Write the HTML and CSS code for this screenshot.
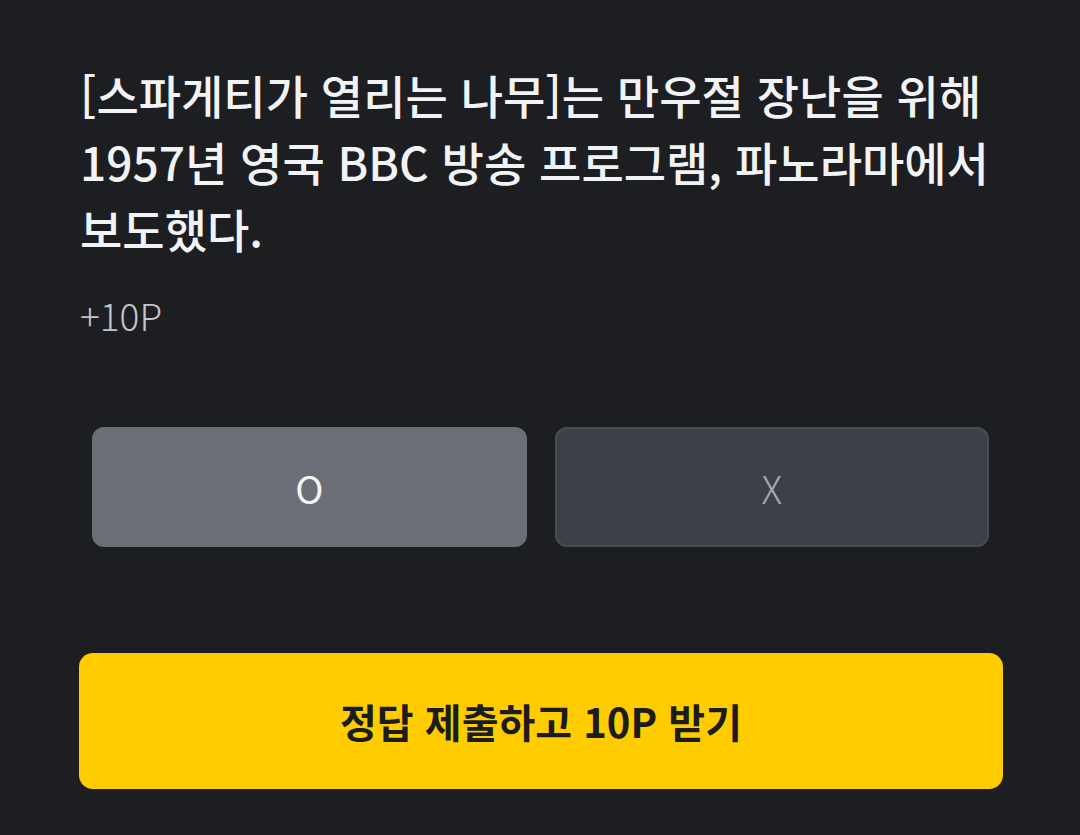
FILE: index.html
```html
<!DOCTYPE html>
<html lang="ko">
<head>
  <meta charset="UTF-8" />
  <meta name="viewport" content="width=device-width, initial-scale=1.0"/>
  <title>OX 퀴즈</title>
  <link rel="stylesheet" href="styles.css">
</head>
<body>

  <div class="quiz">
    <h1 class="question">[스파게티가 열리는 나무]는 만우절 장난을 위해<br>1957년 영국 BBC 방송 프로그램, 파노라마에서<br>보도했다.</h1>
    <div class="reward">+10P</div>

    <div class="choices">
      <button class="choice selected">O</button>
      <button class="choice">X</button>
    </div>

    <button class="submit">정답 제출하고 10P 받기</button>
  </div>

</body>
</html>
```

FILE: styles.css
```css
body {
  font-family: 'Noto Sans CJK KR', 'Noto Sans', sans-serif;
  background: #1d1e22;
  margin: 0;
  padding: 0;
}

.quiz {
  padding: 61px 77px 0 80px;
}

.question {
  color: #f2f3f5;
  font-size: 46px;
  font-weight: 500;
  line-height: 67px;
  margin: 0;
  white-space: nowrap;
}

.reward {
  color: #c2c5ca;
  font-size: 37px;
  font-weight: 300;
  margin-top: 29px;
  line-height: 48px;
}

.choices {
  display: flex;
  gap: 28px;
  margin: 88px 14px 0 12px;
}

.choice {
  flex: 1;
  height: 120px;
  border-radius: 12px;
  border: 2px solid #4a4c54;
  background: #3e4048;
  color: #a7aab0;
  font-family: inherit;
  font-size: 38px;
  font-weight: 300;
}

.choice.selected {
  background: #6b6e77;
  border-color: #6b6e77;
  color: #f4f5f7;
  font-weight: 400;
}

.submit {
  display: block;
  width: 924px;
  height: 136px;
  margin: 106px 0 0 -1px;
  border: none;
  border-radius: 14px;
  background: #ffcc00;
  color: #1c1c1c;
  font-family: inherit;
  font-size: 40px;
  font-weight: 700;
}
```
